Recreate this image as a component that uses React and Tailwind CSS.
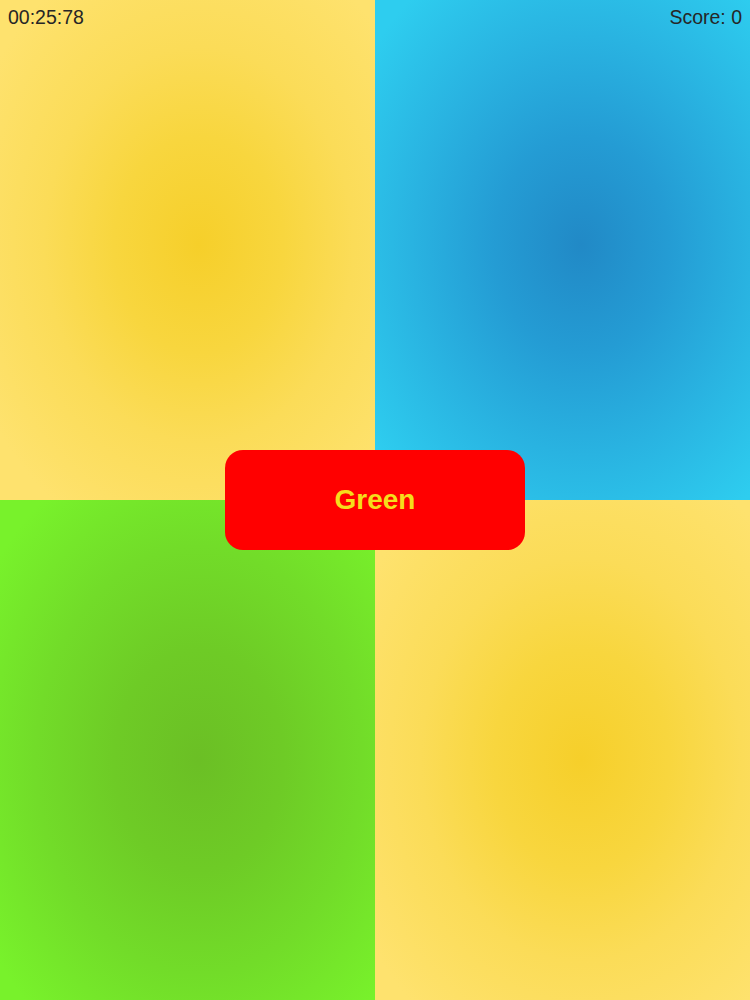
import React from "react";

export default function App() {
  return (
    <div className="relative w-[750px] h-[1000px] overflow-hidden font-['Liberation_Sans',Arial,sans-serif]">
      <div className="grid grid-cols-2 grid-rows-2 w-full h-full">
        <div className="bg-[radial-gradient(ellipse_at_53%_49%,#f6cf2a_0%,#f8d63e_30%,#fbdc58_55%,#fee26e_88%)]" />
        <div className="bg-[radial-gradient(ellipse_at_55%_49%,#2189c6_0%,#249cd4_30%,#29b3e1_58%,#2ecdef_90%)]" />
        <div className="bg-[radial-gradient(ellipse_at_53%_52%,#6bbf25_0%,#6ecb26_30%,#72dc29_58%,#78f22b_90%)]" />
        <div className="bg-[radial-gradient(ellipse_at_55%_52%,#f6cf2a_0%,#f8d63e_30%,#fbdc58_55%,#fee26e_88%)]" />
      </div>

      <div className="absolute top-0 left-0 right-0 flex justify-between px-[8px] pt-[7px] text-[19.5px] leading-[20px] text-[#262626]">
        <span>00:25:78</span>
        <span>Score: 0</span>
      </div>

      <div className="absolute left-[225px] top-[450px] w-[300px] h-[100px] rounded-[18px] bg-[#ff0000] flex items-center justify-center">
        <span className="text-[28px] font-bold text-[#f5dd1c]">Green</span>
      </div>
    </div>
  );
}
